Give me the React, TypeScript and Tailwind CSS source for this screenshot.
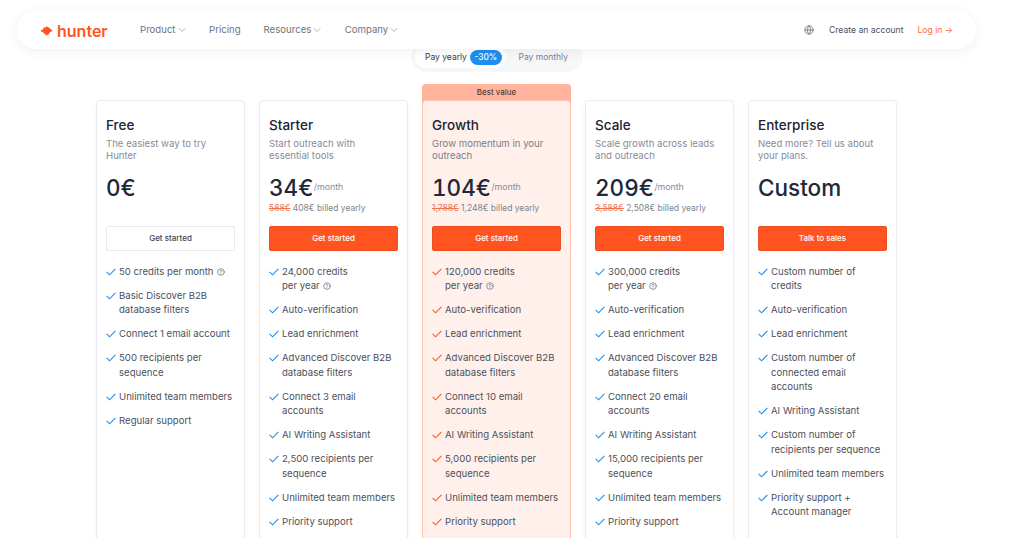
import React from 'react';
import { ChevronDown, CircleHelp, Globe } from 'lucide-react';

interface Feature {
  text: React.ReactNode;
  help?: boolean;
}

interface Plan {
  name: string;
  tagline: string[];
  price: string;
  perMonth?: boolean;
  oldPrice?: string;
  billed?: string;
  cta: string;
  best?: boolean;
  features: Feature[];
}

const plans: Plan[] = [
  {
    name: 'Free',
    tagline: ['The easiest way to try', 'Hunter'],
    price: '0€',
    cta: 'Get started',
    features: [
      { text: '50 credits per month', help: true },
      { text: <>Basic Discover B2B<br />database filters</> },
      { text: 'Connect 1 email account' },
      { text: <>500 recipients per<br />sequence</> },
      { text: 'Unlimited team members' },
      { text: 'Regular support' },
    ],
  },
  {
    name: 'Starter',
    tagline: ['Start outreach with', 'essential tools'],
    price: '34€',
    perMonth: true,
    oldPrice: '588€',
    billed: '408€ billed yearly',
    cta: 'Get started',
    features: [
      { text: <>24,000 credits<br />per year</>, help: true },
      { text: 'Auto-verification' },
      { text: 'Lead enrichment' },
      { text: <>Advanced Discover B2B<br />database filters</> },
      { text: <>Connect 3 email<br />accounts</> },
      { text: 'AI Writing Assistant' },
      { text: <>2,500 recipients per<br />sequence</> },
      { text: 'Unlimited team members' },
      { text: 'Priority support' },
    ],
  },
  {
    name: 'Growth',
    tagline: ['Grow momentum in your', 'outreach'],
    price: '104€',
    perMonth: true,
    oldPrice: '1,788€',
    billed: '1,248€ billed yearly',
    cta: 'Get started',
    best: true,
    features: [
      { text: <>120,000 credits<br />per year</>, help: true },
      { text: 'Auto-verification' },
      { text: 'Lead enrichment' },
      { text: <>Advanced Discover B2B<br />database filters</> },
      { text: <>Connect 10 email<br />accounts</> },
      { text: 'AI Writing Assistant' },
      { text: <>5,000 recipients per<br />sequence</> },
      { text: 'Unlimited team members' },
      { text: 'Priority support' },
    ],
  },
  {
    name: 'Scale',
    tagline: ['Scale growth across leads', 'and outreach'],
    price: '209€',
    perMonth: true,
    oldPrice: '3,588€',
    billed: '2,508€ billed yearly',
    cta: 'Get started',
    features: [
      { text: <>300,000 credits<br />per year</>, help: true },
      { text: 'Auto-verification' },
      { text: 'Lead enrichment' },
      { text: <>Advanced Discover B2B<br />database filters</> },
      { text: <>Connect 20 email<br />accounts</> },
      { text: 'AI Writing Assistant' },
      { text: <>15,000 recipients per<br />sequence</> },
      { text: 'Unlimited team members' },
      { text: 'Priority support' },
    ],
  },
  {
    name: 'Enterprise',
    tagline: ['Need more? Tell us about', 'your plans.'],
    price: 'Custom',
    cta: 'Talk to sales',
    features: [
      { text: <>Custom number of<br />credits</> },
      { text: 'Auto-verification' },
      { text: 'Lead enrichment' },
      { text: <>Custom number of<br />connected email<br />accounts</> },
      { text: 'AI Writing Assistant' },
      { text: <>Custom number of<br />recipients per sequence</> },
      { text: 'Unlimited team members' },
      { text: <>Priority support +<br />Account manager</> },
    ],
  },
];

const navItems = [
  { label: 'Product', caret: true },
  { label: 'Pricing', caret: false },
  { label: 'Resources', caret: true },
  { label: 'Company', caret: true },
];

const CheckMark: React.FC<{ best?: boolean }> = ({ best }) => (
  <svg
    viewBox="0 0 10 8"
    className={`mt-[3px] h-[8px] w-[10px] shrink-0 ${best ? 'text-[#ff5722]' : 'text-[#1d8fee]'}`}
    fill="none"
    stroke="currentColor"
    strokeWidth="1.1"
  >
    <path d="M0.6 3.8 L3.6 6.8 L9.4 0.8" />
  </svg>
);

const PlanCard: React.FC<{ plan: Plan }> = ({ plan }) => (
  <div className="relative w-[149px] shrink-0">
    {plan.best && (
      <div className="absolute left-0 right-0 top-[-16px] h-[30px] rounded-t-[4px] bg-[#ffb39c] pt-[2px] text-center text-[8px] leading-[12px] text-[#3a2a28]">
        Best value
      </div>
    )}
    <div
      className={`relative h-[600px] rounded-[4px] border px-[9px] pt-[17px] ${
        plan.best
          ? 'border-[#ffc4b0] bg-[#fff0ec]'
          : 'border-[#e9ecf1] bg-white shadow-[0_2px_6px_rgba(30,40,60,0.04)]'
      }`}
    >
      <h3 className="whitespace-nowrap text-[13.5px] font-medium leading-[15px] text-[#20242e]">{plan.name}</h3>
      <p className={`mt-[5px] whitespace-nowrap text-[9.6px] leading-[12px] ${plan.best ? 'text-[#7c7d83]' : 'text-[#878c96]'}`}>
        {plan.tagline[0]}
        <br />
        {plan.tagline[1]}
      </p>
      <div className="mt-[14px] flex h-[24px] items-center">
        <span className="text-[22.5px] font-medium leading-[24px] tabular-nums text-[#20283a]">{plan.price}</span>
        {plan.perMonth && <span className="ml-[0.5px] mt-[-3px] text-[8.8px] text-[#868b94]">/month</span>}
      </div>
      <div className="mt-[2px] h-[12px] whitespace-nowrap text-[8.5px] leading-[12px] text-[#80848e]">
        {plan.oldPrice && (
          <>
            <span className="text-[#f0724f] line-through">{plan.oldPrice}</span> {plan.billed}
          </>
        )}
      </div>
      <button
        className={`mt-[12px] block h-[24.5px] w-full rounded-[2px] border text-[8px] font-medium ${
          plan.name === 'Free'
            ? 'border-[#e6e8ec] bg-white text-[#3f4450]'
            : 'border-[#f04d1c] bg-[#ff5420] text-white'
        }`}
      >
        {plan.cta}
      </button>
      <ul className="mt-[14.5px] flex flex-col gap-[9.6px]">
        {plan.features.map((feature, i) => (
          <li key={i} className="flex gap-[3px] whitespace-nowrap text-[9.6px] leading-[14.4px] text-[#4b505b]">
            <CheckMark best={plan.best} />
            <span>
              {feature.text}
              {feature.help && (
                <CircleHelp className="ml-[3px] inline h-[8px] w-[8px] align-[-0.5px] text-[#5f646e]" strokeWidth={2} />
              )}
            </span>
          </li>
        ))}
      </ul>
    </div>
  </div>
);

export default function App() {
  return (
    <div
      className="relative h-[538px] w-[1020px] overflow-hidden bg-white"
      style={{ fontFamily: 'Inter, "Noto Sans", sans-serif' }}
    >
      <header className="absolute left-[17px] top-[11px] z-10 flex h-[38px] w-[959px] items-center rounded-full bg-white pl-[24px] pr-[23px] pt-[1px] shadow-[0_2px_12px_rgba(30,40,60,0.07)]">
        <div className="flex w-[99px] items-center gap-[4px] text-[#ff5420]">
          <svg viewBox="0 0 12 10" className="h-[10px] w-[12px]" fill="currentColor">
            <path d="M0 3.8 L2 3.8 L2.6 1.6 L4.6 1.6 L5 0.4 L7.2 1 L9 2.6 L11.8 4.8 L9 6.2 L7.6 8.4 L5 9.4 L4 8 L2.4 7 L2 5.8 L0 5.8 Z" />
          </svg>
          <span className="text-[16px] font-semibold leading-none">hunter</span>
        </div>
        <nav className="flex items-center gap-[23px]">
          {navItems.map((item) => (
            <span key={item.label} className="flex items-center text-[9.6px] text-[#6d727c]">
              {item.label}
              {item.caret && <ChevronDown className="mr-[-1.5px] h-[12px] w-[12px] text-[#9a9ea6]" strokeWidth={1.5} />}
            </span>
          ))}
        </nav>
        <div className="ml-auto flex items-center">
          <Globe className="h-[10px] w-[10px] text-[#6d727c]" strokeWidth={2} />
          <span className="ml-[15px] text-[8.6px] text-[#4b505b]">Create an account</span>
          <span className="ml-[14px] text-[8.6px] text-[#ff6a3d]">Log in →</span>
        </div>
      </header>

      <main className="flex w-[993px] flex-col items-center pt-[43px]">
        <div className="flex h-[28px] w-[170px] items-center rounded-full bg-[#f6f7f9] p-[3px] shadow-[0_0_0_1px_rgba(30,40,60,0.03)]">
          <div className="flex h-full w-[91px] shrink-0 items-center gap-[3px] whitespace-nowrap rounded-full bg-white pl-[10.5px] text-[8.5px] text-[#353a45]">
            Pay yearly
            <span className="rounded-full bg-[#1d8fee] px-[4.5px] py-[2px] text-[8.4px] font-medium leading-[11px] text-white">-30%</span>
          </div>
          <span className="ml-[13px] whitespace-nowrap text-[8.5px] text-[#7b808a]">Pay monthly</span>
        </div>
        <div className="mt-[29px] flex gap-[14px]">
          {plans.map((plan) => (
            <PlanCard key={plan.name} plan={plan} />
          ))}
        </div>
      </main>
    </div>
  );
}
